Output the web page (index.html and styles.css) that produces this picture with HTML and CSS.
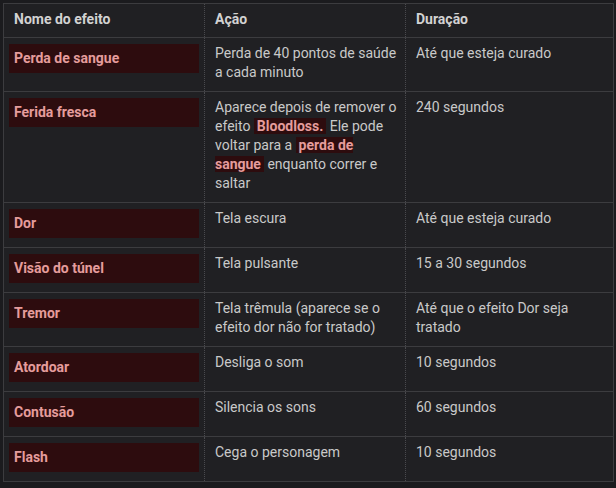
FILE: index.html
```html
<!DOCTYPE html>
<html lang="pt">
<head>
<meta charset="utf-8">
<link rel="stylesheet" href="styles.css">
</head>
<body>
<table class="effects">
  <colgroup>
    <col class="c1"><col class="c2"><col class="c3">
  </colgroup>
  <thead>
    <tr><th>Nome do efeito</th><th>Ação</th><th>Duração</th></tr>
  </thead>
  <tbody>
    <tr>
      <td class="name"><span class="badge">Perda de sangue</span></td>
      <td>Perda de 40 pontos de saúde a cada minuto</td>
      <td>Até que esteja curado</td>
    </tr>
    <tr>
      <td class="name"><span class="badge">Ferida fresca</span></td>
      <td>Aparece depois de remover o efeito <span class="hl">Bloodloss.</span> Ele pode voltar para a <span class="hl">perda de sangue</span> enquanto correr e saltar</td>
      <td>240 segundos</td>
    </tr>
    <tr>
      <td class="name"><span class="badge">Dor</span></td>
      <td>Tela escura</td>
      <td>Até que esteja curado</td>
    </tr>
    <tr>
      <td class="name"><span class="badge">Visão do túnel</span></td>
      <td>Tela pulsante</td>
      <td>15 a 30 segundos</td>
    </tr>
    <tr>
      <td class="name"><span class="badge">Tremor</span></td>
      <td>Tela trêmula (aparece se o efeito dor não for tratado)</td>
      <td>Até que o efeito Dor seja tratado</td>
    </tr>
    <tr>
      <td class="name"><span class="badge">Atordoar</span></td>
      <td>Desliga o som</td>
      <td>10 segundos</td>
    </tr>
    <tr>
      <td class="name"><span class="badge">Contusão</span></td>
      <td>Silencia os sons</td>
      <td>60 segundos</td>
    </tr>
    <tr>
      <td class="name"><span class="badge">Flash</span></td>
      <td>Cega o personagem</td>
      <td>10 segundos</td>
    </tr>
  </tbody>
</table>
</body>
</html>
```
FILE: styles.css
```css
html, body {
  margin: 0;
  background: #1b1b1e;
}
body {
  padding: 3px;
  font-family: Roboto, "Liberation Sans", sans-serif;
  font-size: 14px;
  line-height: 19px;
  color: #c9c9c9;
}
.effects {
  width: 610px;
  border-collapse: collapse;
  table-layout: fixed;
  background: #202023;
  border: 1px solid #3c3c3f;
}
.c1 { width: 201px; }
.c2 { width: 201px; }
.c3 { width: 208px; }
th, td {
  text-align: left;
  vertical-align: top;
  border-top: 1px solid #3c3c3f;
  border-bottom: 1px solid #3c3c3f;
  border-left: 1px dotted #4a4a4e;
  padding: 6px 5px 9px 10px;
}
th {
  font-weight: 700;
  color: #d2d2d2;
  padding: 6px 10px 8px 10px;
}
td.name {
  padding: 6px 5px 9px 5px;
}
.badge {
  display: block;
  height: 29px;
  line-height: 29px;
  padding: 0 5px;
  background: #2d0c0e;
  color: #e59c9c;
  font-weight: 700;
}
.hl {
  background: #2d0c0e;
  color: #e59c9c;
  font-weight: 700;
  padding: 0 3px;
}
```
